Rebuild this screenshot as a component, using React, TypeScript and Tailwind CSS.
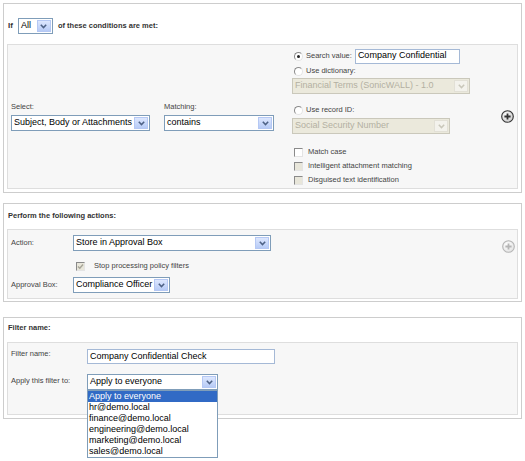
import React from "react";

const LBL = "text-[7.5px] leading-[10px] text-[#444]";

function Chevron({ disabled }: { disabled?: boolean }) {
  return (
    <svg width="7" height="5" viewBox="0 0 7 5">
      <path d="M0.8 0.8 L3.5 3.6 L6.2 0.8" fill="none" stroke={disabled ? "#c9c7ba" : "#4d6185"} strokeWidth="1.5" />
    </svg>
  );
}

function Sel({ w, text, disabled }: { w: string; text: string; disabled?: boolean }) {
  return (
    <div
      className={`flex h-[16px] items-stretch border ${w} ${
        disabled ? "border-[#cac8bb] bg-[#ebe9dc] text-[#b3b0a2]" : "border-[#7f9db9] bg-white text-black"
      }`}
    >
      <div className="flex flex-1 items-center overflow-hidden whitespace-nowrap pl-[2px] text-[9px]">{text}</div>
      <div
        className={`m-px flex w-[14px] items-center justify-center border ${
          disabled ? "border-[#e2e0d6] bg-[#f3f2ec]" : "border-[#b5c8f4] bg-gradient-to-b from-[#dde7fe] to-[#b7cbf6]"
        }`}
      >
        <Chevron disabled={disabled} />
      </div>
    </div>
  );
}

function Radio({ checked }: { checked?: boolean }) {
  return (
    <div className="flex h-[9px] w-[9px] items-center justify-center rounded-full border border-[#8a8a8a] border-b-[#e4e4e4] border-r-[#e4e4e4] bg-white">
      {checked && <div className="h-[3px] w-[3px] rounded-full bg-[#222]" />}
    </div>
  );
}

function Check({ disabled, checked }: { disabled?: boolean; checked?: boolean }) {
  return (
    <div
      className={`flex h-[9px] w-[9px] items-center justify-center border border-[#8a8a8a] border-b-[#e4e4e4] border-r-[#e4e4e4] ${
        disabled ? "bg-[#e8e6da]" : "bg-white"
      }`}
    >
      {checked && (
        <svg width="7" height="7" viewBox="0 0 7 7">
          <path d="M1 3.5 L2.8 5.3 L6 1.5" fill="none" stroke="#a6a497" strokeWidth="1.4" />
        </svg>
      )}
    </div>
  );
}

function Plus({ dim }: { dim?: boolean }) {
  const c = dim ? "#b5b5b5" : "#333";
  return (
    <svg width="13" height="13" viewBox="0 0 13 13">
      <defs>
        <radialGradient id={dim ? "gd" : "gp"} cx="0.4" cy="0.35" r="0.7">
          <stop offset="0" stopColor="#ffffff" />
          <stop offset="1" stopColor={dim ? "#e2e2e2" : "#c9c9c9"} />
        </radialGradient>
      </defs>
      <circle cx="6.5" cy="6.5" r="5.8" fill={`url(#${dim ? "gd" : "gp"})`} stroke={c} strokeWidth="1.1" />
      <path d="M6.5 3.4 V9.6 M3.4 6.5 H9.6" stroke={c} strokeWidth="1.8" />
    </svg>
  );
}

function Input({ w, value }: { w: string; value: string }) {
  return (
    <div className={`flex h-[15px] items-center border border-[#a5b9d6] bg-white pl-[2px] text-[9px] text-black ${w}`}>
      {value}
    </div>
  );
}

export default function App() {
  return (
    <div className="h-[461px] w-[525px] bg-white font-['Liberation_Sans',Arial,sans-serif]">
      <div className="h-[3px]" />
      {/* Panel 1 */}
      <div className="ml-[3px] w-[519px] border border-[#cdcdcd] px-[3px] pb-[3px] pt-[14px]">
        <div className="flex h-[16px] items-center">
          <span className="ml-[1px] text-[8px] font-bold text-[#333]">If</span>
          <div className="ml-[5px]">
            <Sel w="w-[35px]" text="All" />
          </div>
          <span className="ml-[5px] text-[7.5px] font-bold text-[#333]">of these conditions are met:</span>
        </div>
        <div className="mt-[10px] flex h-[145px] items-center border border-[#dedede] bg-[#f7f7f7] pl-[3px]">
          <div className="flex flex-col gap-[3px]">
            <span className={LBL}>Select:</span>
            <Sel w="w-[139px]" text="Subject, Body or Attachments" />
          </div>
          <div className="ml-[14px] flex flex-col gap-[3px]">
            <span className={LBL}>Matching:</span>
            <Sel w="w-[110px]" text="contains" />
          </div>
          <div className="ml-[18px] flex flex-col self-start pt-[3px]">
            <div className="flex h-[16px] items-center pl-[2px]">
              <Radio checked />
              <span className={`${LBL} ml-[3px]`}>Search value:</span>
              <div className="ml-[3px]">
                <Input w="w-[105px]" value="Company Confidential" />
              </div>
            </div>
            <div className="mt-[1px] flex h-[12px] items-center pl-[2px]">
              <Radio />
              <span className={`${LBL} ml-[3px]`}>Use dictionary:</span>
            </div>
            <div className="mt-[1px]">
              <Sel w="w-[178px]" text="Financial Terms (SonicWALL) - 1.0" disabled />
            </div>
            <div className="mt-[10px] flex h-[12px] items-center pl-[2px]">
              <Radio />
              <span className={`${LBL} ml-[3px]`}>Use record ID:</span>
            </div>
            <div className="mt-[2px]">
              <Sel w="w-[158px]" text="Social Security Number" disabled />
            </div>
            <div className="mt-[11px] flex flex-col">
              {[
                ["Match case", false],
                ["Intelligent attachment matching", true],
                ["Disguised text identification", true],
              ].map(([t, d]) => (
                <div key={t as string} className="flex h-[14px] items-center pl-[2px]">
                  <Check disabled={d as boolean} />
                  <span className={`${LBL} ml-[5px]`}>{t as string}</span>
                </div>
              ))}
            </div>
          </div>
          <div className="ml-auto mr-[3px]">
            <Plus />
          </div>
        </div>
      </div>

      {/* Panel 2 */}
      <div className="ml-[3px] mt-[10px] w-[519px] border border-[#cdcdcd] px-[3px] pb-[2px] pt-[6px]">
        <div className="flex h-[12px] items-center pl-[1px] text-[7.5px] font-bold text-[#333]">
          Perform the following actions:
        </div>
        <div className="mt-[7px] flex h-[70px] border border-[#dedede] bg-[#f7f7f7] pl-[3px] pt-[5px]">
          <div className="flex flex-col">
            <div className="flex h-[16px] items-center">
              <span className={`${LBL} w-[62px]`}>Action:</span>
              <Sel w="w-[198px]" text="Store in Approval Box" />
            </div>
            <div className="mt-[8px] flex h-[14px] items-center pl-[65px]">
              <Check disabled checked />
              <span className={`${LBL} ml-[9px]`}>Stop processing policy filters</span>
            </div>
            <div className="mt-[4px] flex h-[16px] items-center">
              <span className={`${LBL} w-[62px]`}>Approval Box:</span>
              <Sel w="w-[97px]" text="Compliance Officer" />
            </div>
          </div>
          <div className="ml-auto mr-[2px] mt-[5px]">
            <Plus dim />
          </div>
        </div>
      </div>

      {/* Panel 3 */}
      <div className="ml-[3px] mt-[15px] w-[519px] border border-[#cdcdcd] px-[3px] pb-[3px] pt-[4px]">
        <div className="flex h-[12px] items-center pl-[1px] text-[7.5px] font-bold text-[#333]">Filter name:</div>
        <div className="mt-[8px] flex h-[73px] flex-col border border-[#dedede] bg-[#f7f7f7] pl-[3px] pt-[6px]">
          <div className="flex h-[15px] items-start">
            <span className={`${LBL} w-[76px]`}>Filter name:</span>
            <Input w="w-[188px]" value="Company Confidential Check" />
          </div>
          <div className="mt-[10px] flex items-start">
            <span className={`${LBL} mt-[2px] w-[76px]`}>Apply this filter to:</span>
            <div className="relative">
              <Sel w="w-[131px]" text="Apply to everyone" />
              <div className="absolute left-0 top-[16px] z-10 w-[131px] border border-[#7f9db9] bg-white text-[9px] leading-[11px] text-black">
                {[
                  "Apply to everyone",
                  "hr@demo.local",
                  "finance@demo.local",
                  "engineering@demo.local",
                  "marketing@demo.local",
                  "sales@demo.local",
                ].map((t, i) => (
                  <div key={t} className={`h-[11px] pl-[1px] ${i === 0 ? "bg-[#316ac5] text-white" : ""}`}>
                    {t}
                  </div>
                ))}
              </div>
            </div>
          </div>
        </div>
      </div>
    </div>
  );
}
